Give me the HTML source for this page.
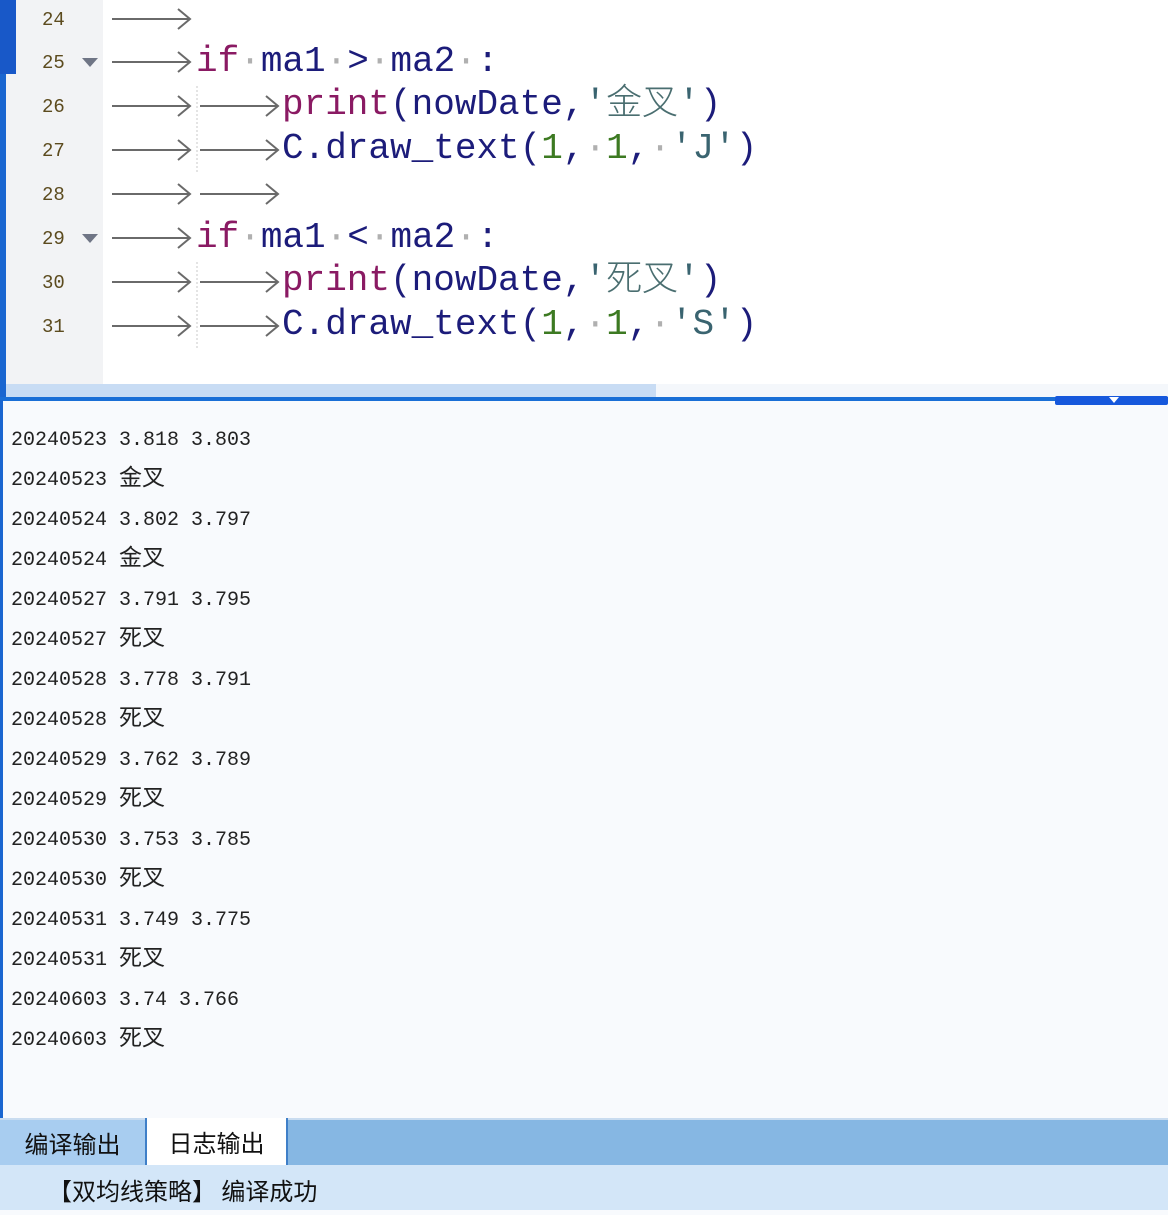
<!DOCTYPE html>
<html><head><meta charset="utf-8"><style>
*{margin:0;padding:0;box-sizing:border-box}
body{width:1168px;height:1210px;position:relative;overflow:hidden;background:#f8fafd;font-family:"Liberation Mono","Noto Sans CJK SC",monospace}
.editor{position:absolute;left:0;top:0;width:1168px;height:398px;background:#fff}
.gut{position:absolute;left:6px;top:0;width:97px;height:384px;background:#f2f3f5}
.lb{position:absolute;left:0;top:0;width:6px;height:400px;background:#1a66d0}
.lb2{position:absolute;left:0;top:0;width:16px;height:74px;background:#1858c8}
.ln{position:absolute;left:42px;font-size:19px;color:#5c4b1e;height:44px;line-height:44px}
.fold{position:absolute;left:82px;width:0;height:0;border-left:8px solid transparent;border-right:8px solid transparent;border-top:9px solid #6f7585}
.code{position:absolute;font-size:36px;height:44px;line-height:44px;white-space:pre;color:#1c1c7a}
.k{color:#8a1a63}.n{color:#3d7a22}.s{color:#3a6470}.d{color:#b0b0b0}
.cj{font-family:"Noto Sans CJK SC",sans-serif;font-weight:300;color:#4a6e70;line-height:0}
svg{position:absolute;left:0;top:0}
.hs{position:absolute;left:6px;top:384px;width:650px;height:13px;background:#c8dcf4}
.hs2{position:absolute;left:656px;top:384px;width:512px;height:13px;background:#f4f7fb}
.bl{position:absolute;left:0;top:397px;width:1168px;height:4px;background:#1a6fd6}
.bt{position:absolute;left:1055px;top:396px;width:113px;height:9px;background:#1658dc;border-radius:2px}
.bt:after{content:"";position:absolute;left:54px;top:1px;border-left:5px solid transparent;border-right:5px solid transparent;border-top:6px solid #fff}
.ob{position:absolute;left:0;top:400px;width:3px;height:720px;background:#1a66d0}
.out{position:absolute;left:11px;font-size:20px;color:#222;line-height:40px;white-space:pre;font-family:"Liberation Mono","Noto Sans CJK SC",monospace}
.out b{font-weight:normal;font-family:"Noto Sans CJK SC",sans-serif;font-size:23px;line-height:0}
.tabs{position:absolute;left:0;top:1118px;width:1168px;height:47px;background:#86b7e3;border-top:2px solid #c9dcf0}
.t1{position:absolute;left:0;top:0;width:145px;height:45px;background:#a8cdf0;font-size:24px;line-height:45px;text-align:center;color:#111;font-family:"Noto Sans CJK SC",sans-serif}
.t2{position:absolute;left:145px;top:-2px;width:143px;height:47px;background:#fff;border-left:2px solid #3f7fc8;border-right:2px solid #3f7fc8;font-size:24px;line-height:47px;text-align:center;color:#111;font-family:"Noto Sans CJK SC",sans-serif}
.st{position:absolute;left:0;top:1165px;width:1168px;height:45px;background:#d3e6f8;font-size:24px;line-height:50px;padding-left:48px;color:#111;font-family:"Noto Sans CJK SC",sans-serif;white-space:pre}
</style></head><body>
<div class="editor"></div>
<div class="gut"></div>
<div class="lb"></div><div class="lb2"></div>
<svg width="1168" height="400">
<g stroke="#6a6a6a" stroke-width="2" fill="none">
<line x1="112" y1="19" x2="189" y2="19"/><polyline points="178,9 190,19 178,29"/>
<line x1="112" y1="62" x2="189" y2="62"/><polyline points="178,52 190,62 178,72"/>
<line x1="112" y1="106" x2="189" y2="106"/><polyline points="178,96 190,106 178,116"/>
<line x1="112" y1="150" x2="189" y2="150"/><polyline points="178,140 190,150 178,160"/>
<line x1="112" y1="194" x2="189" y2="194"/><polyline points="178,184 190,194 178,204"/>
<line x1="112" y1="238" x2="189" y2="238"/><polyline points="178,228 190,238 178,248"/>
<line x1="112" y1="282" x2="189" y2="282"/><polyline points="178,272 190,282 178,292"/>
<line x1="112" y1="326" x2="189" y2="326"/><polyline points="178,316 190,326 178,336"/>
<line x1="200" y1="106" x2="277" y2="106"/><polyline points="266,96 278,106 266,116"/>
<line x1="200" y1="150" x2="277" y2="150"/><polyline points="266,140 278,150 266,160"/>
<line x1="200" y1="194" x2="277" y2="194"/><polyline points="266,184 278,194 266,204"/>
<line x1="200" y1="282" x2="277" y2="282"/><polyline points="266,272 278,282 266,292"/>
<line x1="200" y1="326" x2="277" y2="326"/><polyline points="266,316 278,326 266,336"/>
</g>
<g stroke="#c8c8c8" stroke-width="1" stroke-dasharray="2,2">
<line x1="197" y1="86" x2="197" y2="172"/>
<line x1="197" y1="262" x2="197" y2="348"/>
</g>
</svg>
<div class="ln" style="top:-2px">24</div>
<div class="ln" style="top:41px">25</div><div class="fold" style="top:58px"></div>
<div class="ln" style="top:85px">26</div>
<div class="ln" style="top:129px">27</div>
<div class="ln" style="top:173px">28</div>
<div class="ln" style="top:217px">29</div><div class="fold" style="top:234px"></div>
<div class="ln" style="top:261px">30</div>
<div class="ln" style="top:305px">31</div>
<div class="code" style="left:196px;top:40px"><span class="k">if</span><span class="d">·</span>ma1<span class="d">·</span>&gt;<span class="d">·</span>ma2<span class="d">·</span>:</div>
<div class="code" style="left:282px;top:83px"><span class="k">print</span>(nowDate,<span class="s">'</span><span class="cj">金叉</span><span class="s">'</span>)</div>
<div class="code" style="left:282px;top:127px">C.draw_text(<span class="n">1</span>,<span class="d">·</span><span class="n">1</span>,<span class="d">·</span><span class="s">'J'</span>)</div>
<div class="code" style="left:196px;top:216px"><span class="k">if</span><span class="d">·</span>ma1<span class="d">·</span>&lt;<span class="d">·</span>ma2<span class="d">·</span>:</div>
<div class="code" style="left:282px;top:259px"><span class="k">print</span>(nowDate,<span class="s">'</span><span class="cj">死叉</span><span class="s">'</span>)</div>
<div class="code" style="left:282px;top:303px">C.draw_text(<span class="n">1</span>,<span class="d">·</span><span class="n">1</span>,<span class="d">·</span><span class="s">'S'</span>)</div>
<div class="hs"></div><div class="hs2"></div>
<div class="bl"></div><div class="bt"></div>
<div class="ob"></div>
<div class="out" style="top:421px">20240523 3.818 3.803
20240523 <b>金叉</b>
20240524 3.802 3.797
20240524 <b>金叉</b>
20240527 3.791 3.795
20240527 <b>死叉</b>
20240528 3.778 3.791
20240528 <b>死叉</b>
20240529 3.762 3.789
20240529 <b>死叉</b>
20240530 3.753 3.785
20240530 <b>死叉</b>
20240531 3.749 3.775
20240531 <b>死叉</b>
20240603 3.74 3.766
20240603 <b>死叉</b></div>
<div class="tabs"><div class="t1">编译输出</div><div class="t2">日志输出</div></div>
<div class="st">【双均线策略】 编译成功</div>
</body></html>
